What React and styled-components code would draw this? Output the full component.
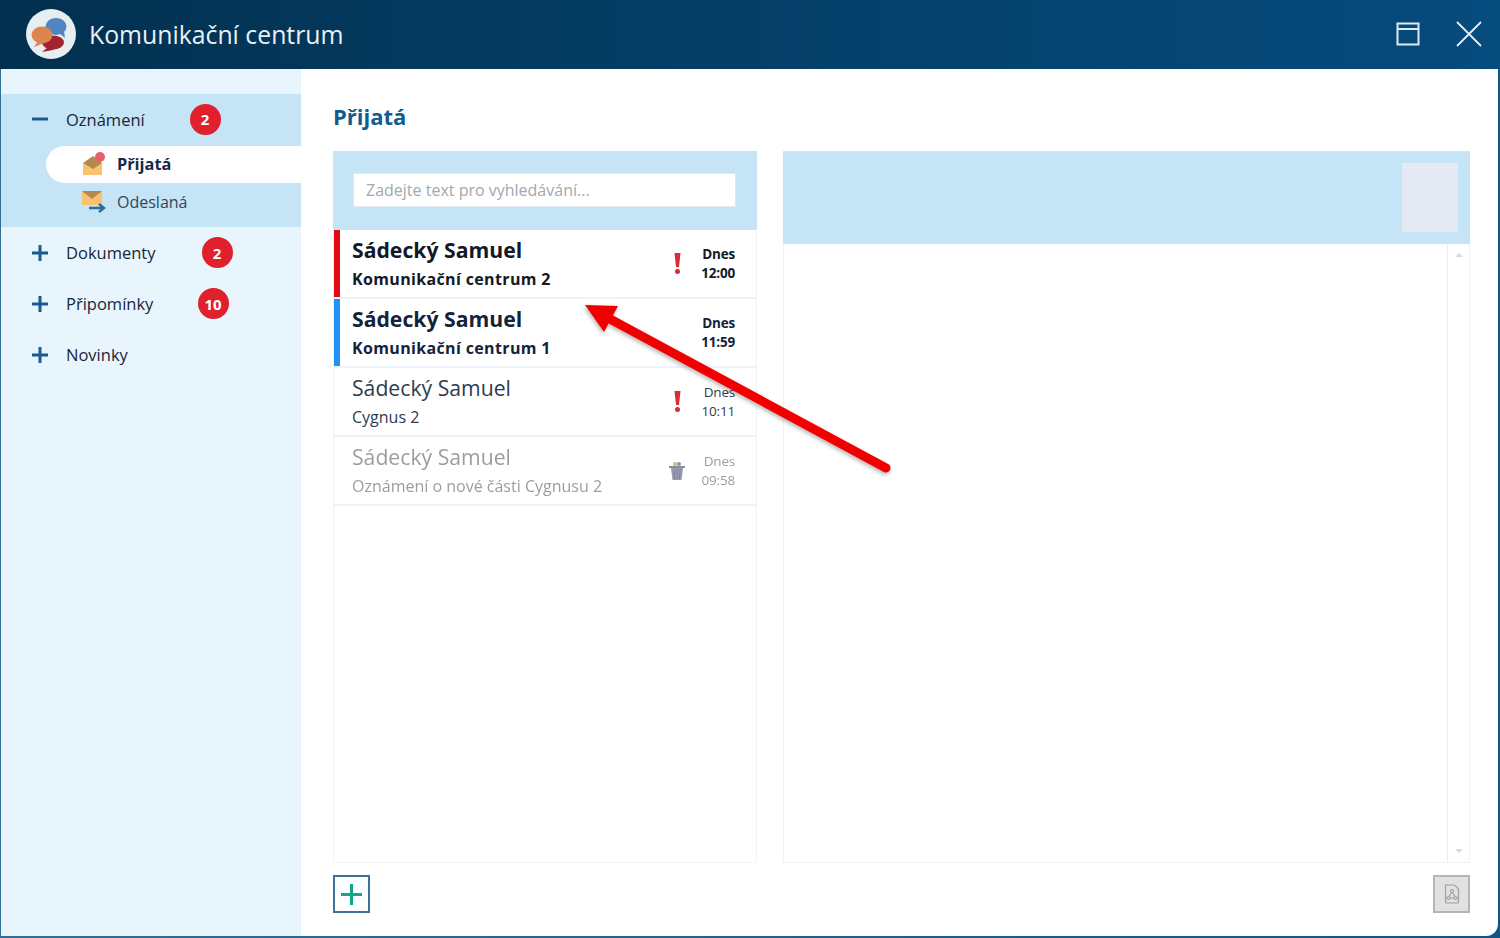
import styled, { createGlobalStyle } from 'styled-components'

const Global = createGlobalStyle`
	html, body { margin: 0; padding: 0; background: #fff; }
	* { box-sizing: border-box; }
	body { font-family: "Open Sans", "Liberation Sans", sans-serif; }
`

const Frame = styled.div`
	position: relative;
	width: 1500px;
	height: 938px;
	display: flex;
	flex-direction: column;
	overflow: hidden;
	padding: 0 2px 2px 1px;
	background: linear-gradient(90deg, #2f6f98 0%, #0f5585 100%);
`
const TitleBar = styled.header`
	height: 69px;
	margin: 0 -2px 0 -1px;
	flex: none;
	display: flex;
	align-items: center;
	padding: 0 18px 0 26px;
	background: linear-gradient(90deg, #02304f 0%, #053f68 50%, #054b7d 100%);
`
const Logo = styled.div`
	width: 50px;
	height: 50px;
	margin-bottom: 1px;
	border-radius: 50%;
	background: #e6eef2;
	display: flex;
	align-items: center;
	justify-content: center;
`
const AppTitle = styled.h1`
	margin: 0 0 2px 13px;
	font-size: 24.8px;
	font-weight: 400;
	color: #e9f1f6;
	flex: 1;
`
const WinButton = styled.button`
	border: 0;
	padding: 0;
	background: none;
	display: flex;
	margin-bottom: 1px;
	margin-left: ${p => p.$gap}px;
`
const Body = styled.div`
	flex: 1;
	min-height: 0;
	display: flex;
	background: #fff;
	border-bottom-right-radius: 12px;
	overflow: hidden;
`
const Sidebar = styled.nav`
	width: 300px;
	flex: none;
	padding-top: 25px;
	background: #e8f5fc;
`
const OpenGroup = styled.div`
	height: 133px;
	background: #c5e4f5;
`
const TreeRow = styled.div`
	height: ${p => p.$h || 51}px;
	display: flex;
	align-items: center;
	padding-left: 31px;
	padding-bottom: ${p => p.$lift || 0}px;
	color: #17263a;
	font-size: 16.5px;
`
const TreeLabel = styled.span`
	width: ${p => p.$w}px;
	margin-left: 18px;
`
const Badge = styled.span`
	width: 31px;
	height: 31px;
	border-radius: 50%;
	background: #e0202c;
	color: #fff;
	font-size: 15px;
	font-weight: 700;
	display: flex;
	align-items: center;
	justify-content: center;
	padding-right: 1px;
`
const SubRow = styled.div`
	height: ${p => p.$h}px;
	margin-left: 45px;
	padding-left: 36px;
	padding-bottom: ${p => (p.$active ? 2 : 0)}px;
	display: flex;
	align-items: center;
	gap: 11px;
	font-size: ${p => (p.$active ? 16.3 : 16)}px;
	font-weight: ${p => (p.$active ? 700 : 400)};
	color: ${p => (p.$active ? '#142a4a' : '#33475c')};
	background: ${p => (p.$active ? '#fff' : 'transparent')};
	border-radius: 19px 0 0 19px;
`
const Main = styled.main`
	flex: 1;
	min-width: 0;
	display: flex;
	flex-direction: column;
	padding: 32px 28px 23px 32px;
`
const Heading = styled.h2`
	margin: 0;
	height: 50px;
	font-size: 22px;
	line-height: 30px;
	font-weight: 700;
	color: #135c8f;
`
const Panels = styled.div`
	height: 712px;
	display: flex;
	gap: 26px;
`
const ListPanel = styled.section`
	width: 424px;
	flex: none;
	display: flex;
	flex-direction: column;
	border: 1px solid #eef2fa;
`
const SearchBar = styled.div`
	height: 79px;
	margin: -1px -1px 0;
	padding: 22px 21px 0 20px;
	background: #c5e4f5;
`
const SearchInput = styled.input`
	width: 100%;
	height: 34px;
	padding: 0 12px;
	border: 1px solid #dfe7f0;
	background: #fff;
	font: 400 16px "Open Sans", sans-serif;
	outline: none;
	&::placeholder { color: #a3a8ad; opacity: 1; }
`
const Message = styled.div`
	height: 69px;
	display: flex;
	align-items: center;
	padding-left: 18px;
	border-bottom: 2px solid #eef2fa;
	box-shadow: ${p => (p.$mark ? `inset 6px 0 0 ${p.$mark}` : 'none')};
	color: ${p => p.$color};
	font-weight: ${p => (p.$unread ? 700 : 400)};
`
const MessageText = styled.div`
	flex: 1;
	min-width: 0;
	padding-bottom: 3px;
	opacity: ${p => (p.$deleted ? 0.5 : 1)};
`
const Sender = styled.div`
	font-size: 21.2px;
	line-height: 29px;
`
const Subject = styled.div`
	font-size: 16px;
	line-height: 21px;
	margin-top: 5px;
	letter-spacing: ${p => (p.$unread ? 0.35 : 0)}px;
`
const Flag = styled.div`
	width: 20px;
	margin-right: 14px;
	display: flex;
	justify-content: center;
`
const When = styled.div`
	width: 55px;
	padding: 1px 21px 0 0;
	font-size: 13.5px;
	line-height: 19px;
	text-align: center;
	letter-spacing: -0.2px;
	white-space: nowrap;
	display: flex;
	flex-direction: column;
	align-items: flex-end;
	opacity: ${p => (p.$deleted ? 0.5 : 1)};
`
const DetailPanel = styled.section`
	flex: 1;
	display: flex;
	flex-direction: column;
	border: 1px solid #eef2fa;
`
const DetailHead = styled.div`
	height: 93px;
	margin: -1px -1px 0;
	padding: 11px 12px 0 0;
	background: #c5e4f5;
	border-top: 1px solid #d8e4ec;
	display: flex;
	justify-content: flex-end;
	flex: none;
`
const Thumb = styled.div`
	width: 56px;
	height: 69px;
	background: #e4e9f4;
`
const DetailBody = styled.div`
	flex: 1;
	display: flex;
	justify-content: flex-end;
`
const ScrollTrack = styled.div`
	width: 22px;
	border-left: 1px solid #e8edf6;
	display: flex;
	flex-direction: column;
	justify-content: space-between;
	align-items: center;
	padding: 9px 0;
`
const ScrollArrow = styled.span`
	width: 0;
	height: 0;
	border-left: 4px solid transparent;
	border-right: 4px solid transparent;
	border-${p => p.$dir}: 4px solid #d5d8dc;
`
const Footer = styled.div`
	display: flex;
	justify-content: space-between;
	margin-top: 12px;
`
const AddButton = styled.button`
	width: 37px;
	height: 38px;
	padding: 0;
	background: #fff;
	border: 2px solid #3f719b;
	display: flex;
	align-items: center;
	justify-content: center;
`
const PdfButton = styled.button`
	width: 37px;
	height: 38px;
	padding: 0;
	background: #e1e1e1;
	border: 2px solid #b5b5b5;
	display: flex;
	align-items: center;
	justify-content: center;
`
const ArrowLayer = styled.svg`
	position: absolute;
	left: 0;
	top: 0;
	pointer-events: none;
`

const LogoIcon = () => (
	<svg width="50" height="50" viewBox="0 0 50 50">
		<ellipse cx="30" cy="17.500" rx="10.500" ry="8.500" fill="#5284c1" />
		<path d="M33 24l6 5-1-7z" fill="#5284c1" />
		<ellipse cx="27" cy="33.500" rx="11" ry="7" fill="#a3232f" />
		<path d="M22 38l-6 5 11-2 3-3z" fill="#a3232f" />
		<ellipse cx="16" cy="26" rx="10.500" ry="8.500" fill="#dd8450" />
		<path d="M12 32l-4 6 10-4z" fill="#dd8450" />
	</svg>
)

const Plus = ({ color = '#1a5a92', size = 16, width = 3 }) => (
	<svg width={size} height={size} viewBox={`0 0 ${size} ${size}`}>
		<path d={`M0 ${size / 2}h${size}M${size / 2} 0v${size}`} stroke={color} strokeWidth={width} fill="none" />
	</svg>
)

const Minus = () => (
	<svg width="16" height="16" viewBox="0 0 16 16">
		<path d="M1 8h14" stroke="#1a5a92" strokeWidth="3" strokeLinecap="round" />
	</svg>
)

const InboxIcon = () => (
	<svg width="24" height="24" viewBox="0 0 24 24">
		<path d="M1 11L11 4l9 7v12H1z" fill="#b58a4e" />
		<path d="M1 11l10 6 9-6v12H1z" fill="#f9c270" />
		<circle cx="18" cy="5" r="5" fill="#e4616b" />
	</svg>
)

const SentIcon = () => (
	<svg width="24" height="24" viewBox="0 0 24 24">
		<path d="M0 1h20v14H0z" fill="#f9c270" />
		<path d="M0 1h20L10 9z" fill="#b58a4e" />
		<path d="M7 18h14M17 14l5 4-5 4" stroke="#2d6d9c" strokeWidth="2.400" fill="none" />
	</svg>
)

const UrgentIcon = () => (
	<svg width="7" height="21" viewBox="0 0 7 21">
		<path d="M.5 0h6L5 14H2z" fill="#d92c38" />
		<circle cx="3.500" cy="18.500" r="2.500" fill="#d92c38" />
	</svg>
)

const TrashIcon = () => (
	<svg width="16" height="20" viewBox="0 0 16 20">
		<circle cx="6" cy="3" r="2" fill="#d9b45c" />
		<circle cx="10" cy="3" r="2" fill="#6f9cc8" />
		<path d="M0 5h16v2H0z" fill="#8b8b9c" />
		<path d="M2 7h12l-1.500 12h-9z" fill="#9a9aae" />
		<path d="M5 8l.5 10M8 8v10M11 8l-.5 10" stroke="#82829a" strokeWidth="1" />
	</svg>
)

const PdfIcon = () => (
	<svg width="16" height="20" viewBox="0 0 16 20" fill="none" stroke="#a0a0a0" strokeWidth="1.200">
		<path d="M1.500 1h9l4 4v13a1 1 0 0 1-1 1h-11a1 1 0 0 1-1-1z" />
		<circle cx="8" cy="7" r="1.500" />
		<circle cx="4.500" cy="14" r="1.500" />
		<circle cx="11.500" cy="14" r="1.500" />
		<path d="M7.500 8.500L5 12.500M8.500 8.500l2.500 4M6 14h4" />
	</svg>
)

const messages = [
	{ id: 1, sender: 'Sádecký Samuel', subject: 'Komunikační centrum 2', day: 'Dnes', time: '12:00', mark: '#e00b14', unread: true, color: '#111a26', urgent: true },
	{ id: 2, sender: 'Sádecký Samuel', subject: 'Komunikační centrum 1', day: 'Dnes', time: '11:59', mark: '#2291f5', unread: true, color: '#14233a' },
	{ id: 3, sender: 'Sádecký Samuel', subject: 'Cygnus 2', day: 'Dnes', time: '10:11', color: '#2c3c50', urgent: true },
	{ id: 4, sender: 'Sádecký Samuel', subject: 'Oznámení o nové části Cygnusu 2', day: 'Dnes', time: '09:58', color: '#3a3a3a', deleted: true },
]

export default function App() {
	return (
		<Frame>
			<Global />
			<TitleBar>
				<Logo><LogoIcon /></Logo>
				<AppTitle>Komunikační centrum</AppTitle>
				<WinButton aria-label="Maximalizovat" $gap={0}>
					<svg width="24" height="24" viewBox="0 0 24 24" fill="none" stroke="#dfe9f0" strokeWidth="2">
						<path d="M1.500 1.500h21v21h-21zM1.500 7h21" />
					</svg>
				</WinButton>
				<WinButton aria-label="Zavřít" $gap={36}>
					<svg width="26" height="26" viewBox="0 0 26 26" fill="none" stroke="#e6eef3" strokeWidth="1.800">
						<path d="M1 1l24 24M25 1L1 25" />
					</svg>
				</WinButton>
			</TitleBar>
			<Body>
				<Sidebar>
					<OpenGroup>
						<TreeRow $h={52} $lift={2}>
							<Minus />
							<TreeLabel $w={124}>Oznámení</TreeLabel>
							<Badge>2</Badge>
						</TreeRow>
						<SubRow $h={37} $active><InboxIcon />Přijatá</SubRow>
						<SubRow $h={38}><SentIcon />Odeslaná</SubRow>
					</OpenGroup>
					<TreeRow>
						<Plus />
						<TreeLabel $w={136}>Dokumenty</TreeLabel>
						<Badge>2</Badge>
					</TreeRow>
					<TreeRow>
						<Plus />
						<TreeLabel $w={132}>Připomínky</TreeLabel>
						<Badge>10</Badge>
					</TreeRow>
					<TreeRow>
						<Plus />
						<TreeLabel $w={120}>Novinky</TreeLabel>
					</TreeRow>
				</Sidebar>
				<Main>
					<Heading>Přijatá</Heading>
					<Panels>
						<ListPanel>
							<SearchBar>
								<SearchInput placeholder="Zadejte text pro vyhledávání..." />
							</SearchBar>
							{messages.map(m => (
								<Message key={m.id} $mark={m.mark} $unread={m.unread} $color={m.color}>
									<MessageText $deleted={m.deleted}>
										<Sender>{m.sender}</Sender>
										<Subject $unread={m.unread}>{m.subject}</Subject>
									</MessageText>
									<Flag>{m.urgent ? <UrgentIcon /> : m.deleted ? <TrashIcon /> : null}</Flag>
									<When $deleted={m.deleted}><span>{m.day}</span><span>{m.time}</span></When>
								</Message>
							))}
						</ListPanel>
						<DetailPanel>
							<DetailHead><Thumb /></DetailHead>
							<DetailBody>
								<ScrollTrack>
									<ScrollArrow $dir="bottom" />
									<ScrollArrow $dir="top" />
								</ScrollTrack>
							</DetailBody>
						</DetailPanel>
					</Panels>
					<Footer>
						<AddButton aria-label="Přidat"><Plus color="#12a58c" size={21} width={3} /></AddButton>
						<PdfButton aria-label="PDF"><PdfIcon /></PdfButton>
					</Footer>
				</Main>
			</Body>
			<ArrowLayer width="1500" height="938" viewBox="0 0 1500 938">
				<defs>
					<filter id="arrowShadow" x="-10%" y="-10%" width="120%" height="120%">
						<feDropShadow dx="-1" dy="2" stdDeviation="2" floodColor="#000" floodOpacity="0.3" />
					</filter>
				</defs>
				<g filter="url(#arrowShadow)">
					<path d="M610 319L886 468" stroke="#f00000" strokeWidth="9" strokeLinecap="round" fill="none" />
					<path d="M585 305L618 306L604 332z" fill="#f00000" />
				</g>
			</ArrowLayer>
		</Frame>
	)
}
